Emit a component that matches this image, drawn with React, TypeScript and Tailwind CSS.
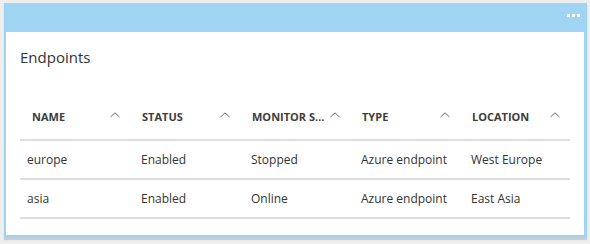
import React from "react";

const font = { fontFamily: '"Segoe UI", "Open Sans", "Noto Sans", sans-serif' };

function Caret() {
  return (
    <svg width="10" height="6" viewBox="0 0 10 6" className="mt-[3px] shrink-0">
      <path d="M0.5 5 L5 0.8 L9.5 5" fill="none" stroke="#6b6b6b" strokeWidth="1" />
    </svg>
  );
}

const headers = ["NAME", "STATUS", "MONITOR STATUS", "TYPE", "LOCATION"];
const rows = [
  ["europe", "Enabled", "Stopped", "Azure endpoint", "West Europe"],
  ["asia", "Enabled", "Online", "Azure endpoint", "East Asia"],
];

export default function App() {
  return (
    <div className="w-[590px] h-[244px] bg-[#eeeeee] pl-[4px] pt-[3px] overflow-hidden" style={font}>
      <div className="w-[583px] h-[235px] bg-[#9fd5f2] flex flex-col shadow-[0_2px_1px_rgba(0,0,0,0.14)]">
        <div className="h-[29px] flex justify-end items-start pt-[11px] pr-[7px] gap-[2px] shrink-0">
          <div className="w-[3px] h-[3px] bg-white" />
          <div className="w-[3px] h-[3px] bg-white" />
          <div className="w-[3px] h-[3px] bg-white" />
        </div>
        <div className="flex-1 bg-white ml-[2px] mr-[3px] mb-[3px] px-[14px] pt-[15px]">
          <div className="text-[15px] leading-[20px] text-[#333333] h-[20px]">Endpoints</div>
          <div className="mt-[28px] w-[550px]">
            <div className="grid grid-cols-[110px_110px_110px_110px_110px] h-[46px] border-b-2 border-[#dddddd]">
              {headers.map((h) => (
                <div key={h} className="flex items-start justify-between pt-[14px] pl-[12px] pr-[10px] gap-[3px]">
                  <span className="text-[11px] leading-[16px] font-bold text-[#3c3c3c] whitespace-nowrap overflow-hidden text-ellipsis min-w-0">
                    {h}
                  </span>
                  <Caret />
                </div>
              ))}
            </div>
            {rows.map((r, ri) => (
              <div key={ri} className="grid grid-cols-[110px_110px_110px_110px_110px] h-[39px] border-b-2 border-[#dddddd] items-start pt-[11px]">
                {r.map((c, ci) => (
                  <div
                    key={ci}
                    className={`text-[12px] leading-[16px] text-[#333333] whitespace-nowrap ${ci === 0 ? "pl-[7px]" : "pl-[11px]"}`}
                  >
                    {c}
                  </div>
                ))}
              </div>
            ))}
          </div>
        </div>
      </div>
    </div>
  );
}
